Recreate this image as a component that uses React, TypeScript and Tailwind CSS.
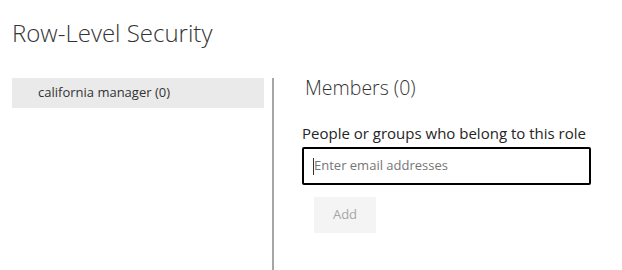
export default function App() {
  return (
    <div className="h-[270px] w-[622px] overflow-hidden bg-white font-['Open_Sans',sans-serif] text-[#333]">
      <h1 className="pl-3 pt-[17px] text-[24px] font-light leading-[32px] text-[#333]">
        Row-Level Security
      </h1>

      <div className="mt-[29px] flex">
        <div className="w-[264px] shrink-0 pl-3">
          <div className="flex h-[30px] w-[252px] items-center bg-[#eaeaea] pl-[26px] text-[13px] text-[#333]">
            california manager (0)
          </div>
        </div>

        <div className="ml-[8px] h-[200px] w-[2px] shrink-0 bg-[#a6a6a6]" />

        <div className="pl-[28px]">
          <h2 className="pl-[3px] text-[19.5px] font-light leading-[20px] text-[#333]">
            Members (0)
          </h2>
          <p className="mt-[25px] text-[15px] leading-[20px] text-[#252525]">
            People or groups who belong to this role
          </p>
          <div className="mt-[4px] flex h-[38px] w-[289px] items-center rounded-[2px] border-2 border-black pl-[9px]">
            <span className="h-[17px] w-px bg-[#333]" />
            <span className="text-[13px] text-[#767676]">Enter email addresses</span>
          </div>
          <button
            type="button"
            className="ml-[12px] mt-[12px] h-[36px] w-[62px] bg-[#f4f4f4] text-[13px] text-[#a6a6a6]"
          >
            Add
          </button>
        </div>
      </div>
    </div>
  );
}
